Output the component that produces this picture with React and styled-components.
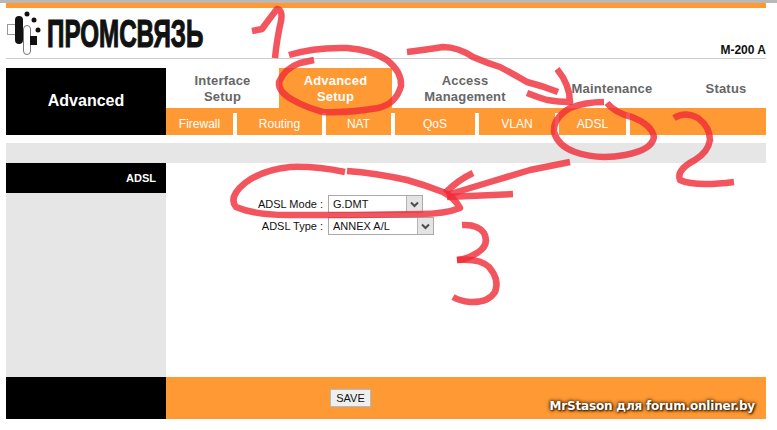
import React from 'react';
import styled, { createGlobalStyle } from 'styled-components';

const TABS = [
  { label: ['Interface', 'Setup'], width: 113 },
  { label: ['Advanced', 'Setup'], width: 113, active: true },
  { label: ['Access', 'Management'], width: 146 },
  { label: ['Maintenance'], width: 148 },
  { label: ['Status'], width: 80 },
];

const SUB_TABS = [
  { label: 'Firewall', width: 67 },
  { label: 'Routing', width: 85 },
  { label: 'NAT', width: 65 },
  { label: 'QoS', width: 80 },
  { label: 'VLAN', width: 76 },
  { label: 'ADSL', width: 67 },
];

const FIELDS = [
  { label: 'ADSL Mode :', value: 'G.DMT', width: 95 },
  { label: 'ADSL Type :', value: 'ANNEX A/L', width: 106 },
];

const SCRIBBLES = [
  // 1
  'M252 31 L262 29 Q270 18 277 9 Q283 10 281 21 Q277 38 275 58',
  // circle round Advanced Setup
  'M289 55 Q315 47 347 48 Q372 50 387 60 Q402 72 401 86 Q396 104 378 108 Q350 113 323 112 Q305 107 293 100 Q278 92 279 82 Q285 68 300 63 L314 60',
  // arrow to ADSL tab
  'M407 52 Q425 50 443 47 Q458 47 473 57 Q487 63 500 67 Q515 75 527 82 Q543 86 558 92',
  'M527 93 Q537 97 547 100 Q558 102 570 102 Q570 85 557 69',
  // circle round ADSL tab
  'M604 102 Q585 102 570 108 Q553 118 554 132 Q558 146 575 152 Q597 160 625 155 Q652 150 654 137 Q652 125 632 117 Q615 113 607 103',
  // 2
  'M674 118 Q685 111 698 118 Q710 127 710 140 Q708 152 695 160 Q676 170 680 180 Q695 187 734 182',
  // arrow to ADSL Mode
  'M570 162 L530 170 L490 182 L447 195',
  'M513 194 L447 197',
  'M473 173 Q458 180 445 193',
  // circle round ADSL Mode
  'M345 172 Q315 166 290 167 Q262 170 245 183 Q228 197 236 207 Q255 215 287 215 L353 215 L420 214 Q445 214 460 208 Q455 198 443 192 Q425 185 407 180 Q375 173 347 171',
  // 3
  'M462 225 Q478 224 484 233 Q490 245 477 253 Q468 259 457 260',
  'M457 260 Q480 258 489 267 Q500 280 495 292 Q488 303 470 302 Q460 301 453 297',
];

const App = () => (
  <Page>
    <GlobalStyle />
    <TopBar />
    <Header>
      <Logo>
        <LogoMark />
        <LogoText><span>ПРОМСВЯЗЬ</span></LogoText>
      </Logo>
      <Model>M-200 A</Model>
    </Header>

    <Nav>
      <NavTitle>Advanced</NavTitle>
      <NavMenu>
        <Tabs>
          {TABS.map(tab => (
            <Tab key={tab.label[0]} $width={tab.width} $active={tab.active}>
              {tab.label.map(line => <span key={line}>{line}</span>)}
            </Tab>
          ))}
        </Tabs>
        <SubTabs>
          {SUB_TABS.map(tab => (
            <SubTab key={tab.label} $width={tab.width}>{tab.label}</SubTab>
          ))}
          <SubTabRest />
        </SubTabs>
      </NavMenu>
    </Nav>

    <Band />

    <Main>
      <Sidebar>
        <SidebarTitle>ADSL</SidebarTitle>
      </Sidebar>
      <Form>
        {FIELDS.map(field => (
          <React.Fragment key={field.label}>
            <FieldLabel>{field.label}</FieldLabel>
            <SelectBox $width={field.width}>
              <SelectValue>{field.value}</SelectValue>
              <SelectArrow>
                <svg width="9" height="7" viewBox="0 0 9 7">
                  <path d="M1 1.5 L4.5 5 L8 1.5" fill="none" stroke="#4d4d4d" strokeWidth="2" />
                </svg>
              </SelectArrow>
            </SelectBox>
          </React.Fragment>
        ))}
      </Form>
    </Main>

    <Footer>
      <FooterSide />
      <FooterBar>
        <SaveButton type="button">SAVE</SaveButton>
        <Watermark>MrStason для forum.onliner.by</Watermark>
      </FooterBar>
    </Footer>

    <Scribbles width="777" height="430" viewBox="0 0 777 430">
      {SCRIBBLES.map(d => <path key={d} d={d} />)}
    </Scribbles>
  </Page>
);

const LogoMark = () => (
  <svg width="41" height="50" viewBox="0 0 41 50">
    <rect x="1.5" y="16.5" width="9" height="10" fill="#fff" stroke="#999" />
    <rect x="17.5" y="17.5" width="7" height="29" rx="3.5" fill="#fff" stroke="#777" />
    <rect x="9" y="8" width="8" height="28" rx="4" fill="#111" />
    <rect x="24" y="28" width="7" height="9" fill="#111" />
    <circle cx="21" cy="6" r="2.5" fill="#111" />
    <circle cx="28" cy="12" r="2.5" fill="#111" />
    <circle cx="32" cy="22" r="2.5" fill="#111" />
  </svg>
);

const GlobalStyle = createGlobalStyle`
  body {
    margin: 0;
    background: #fff;
    font-family: "Liberation Sans", Arial, sans-serif;
  }
`;

const Page = styled.div`
  position: relative;
  width: 777px;
  height: 430px;
  overflow: hidden;
  border-top: 3px solid #b8b8b8;
  box-sizing: border-box;
  padding: 0 11px 0 6px;
`;

const TopBar = styled.div`
  height: 5px;
  background: #ff9933;
`;

const Header = styled.header`
  display: flex;
  justify-content: space-between;
  align-items: flex-end;
  height: 50px;
  border-bottom: 1px solid #ccc;
`;

const Logo = styled.div`
  display: flex;
  align-items: flex-start;
  height: 50px;
`;

const LogoText = styled.div`
  width: 158px;
  margin-top: 5px;
  font-size: 39px;
  line-height: 42px;
  font-weight: 700;
  color: #111;

  & span {
    display: inline-block;
    white-space: nowrap;
    transform: scaleX(0.62);
    transform-origin: left center;
    -webkit-text-stroke: 1.2px #111;
  }
`;

const Model = styled.div`
  font-size: 12px;
  line-height: 14px;
  font-weight: 700;
  color: #111;
  padding-bottom: 1px;
`;

const Nav = styled.nav`
  display: flex;
  height: 67px;
  margin-top: 9px;
`;

const NavTitle = styled.div`
  display: flex;
  align-items: center;
  justify-content: center;
  width: 160px;
  padding-bottom: 2px;
  box-sizing: border-box;
  background: #000;
  color: #fff;
  font-size: 16px;
  font-weight: 700;
`;

const NavMenu = styled.div`
  display: flex;
  flex-direction: column;
  width: 600px;
`;

const Tabs = styled.div`
  display: flex;
  height: 40px;
`;

const Tab = styled.div`
  display: flex;
  flex-direction: column;
  align-items: center;
  justify-content: center;
  box-sizing: border-box;
  padding-top: 2px;
  width: ${props => props.$width}px;
  background: ${props => props.$active ? '#ff9933' : '#fff'};
  color: ${props => props.$active ? '#fff' : '#666'};
  font-size: 13px;
  line-height: 16px;
  font-weight: 700;
  letter-spacing: 0.2px;
`;

const SubTabs = styled.div`
  display: flex;
  height: 27px;
  box-sizing: border-box;
  padding-top: 5px;
  background: #ff9933;
`;

const SubTab = styled.div`
  display: flex;
  align-items: center;
  justify-content: center;
  box-sizing: content-box;
  width: ${props => props.$width}px;
  border-right: 4px solid #fff;
  color: #fff;
  font-size: 12px;
`;

const SubTabRest = styled.div`
  flex: 1;
`;

const Band = styled.div`
  height: 20px;
  margin-top: 8px;
  background: #e6e6e6;
`;

const Main = styled.main`
  display: flex;
  height: 214px;
`;

const Sidebar = styled.aside`
  width: 160px;
  background: #e6e6e6;
`;

const SidebarTitle = styled.div`
  height: 30px;
  padding-right: 10px;
  background: #000;
  color: #fff;
  font-size: 11px;
  line-height: 30px;
  font-weight: 700;
  text-align: right;
`;

const Form = styled.form`
  display: grid;
  grid-template-columns: 157px auto;
  grid-auto-rows: 18px;
  row-gap: 4px;
  column-gap: 5px;
  align-content: start;
  justify-content: start;
  padding-top: 32px;
`;

const FieldLabel = styled.label`
  color: #111;
  font-size: 11px;
  line-height: 18px;
  text-align: right;
`;

const SelectBox = styled.div`
  display: flex;
  box-sizing: border-box;
  width: ${props => props.$width}px;
  height: 18px;
  border: 1px solid #a9a9a9;
  background: #fff;
`;

const SelectValue = styled.div`
  flex: 1;
  padding-left: 4px;
  color: #111;
  font-size: 11px;
  line-height: 16px;
`;

const SelectArrow = styled.div`
  display: flex;
  align-items: center;
  justify-content: center;
  width: 15px;
  background: #e4e4e4;
  border-left: 1px solid #b5b5b5;
`;

const Footer = styled.footer`
  display: flex;
  height: 42px;
`;

const FooterSide = styled.div`
  width: 160px;
  background: #000;
`;

const FooterBar = styled.div`
  position: relative;
  display: flex;
  align-items: flex-start;
  flex: 1;
  padding: 12px 0 0 164px;
  background: #ff9933;
`;

const SaveButton = styled.button`
  width: 41px;
  height: 18px;
  padding: 0;
  border: 1px solid #a9bcc9;
  background: #efefef;
  color: #111;
  font-family: "Liberation Sans", Arial, sans-serif;
  font-size: 11px;
`;

const Watermark = styled.div`
  position: absolute;
  right: 11px;
  bottom: 6px;
  color: #fff;
  font-family: "DejaVu Sans", sans-serif;
  font-size: 12px;
  font-weight: 700;
  line-height: 14px;
  letter-spacing: -0.18px;
  white-space: nowrap;
  text-shadow: 0 0 3px #3a2000, 1px 1px 2px #3a2000, 0 0 4px #3a2000;
`;

const Scribbles = styled.svg`
  position: absolute;
  top: -3px;
  left: 0;
  pointer-events: none;

  & path {
    fill: none;
    stroke: #f02a37;
    stroke-opacity: 0.8;
    stroke-width: 6.5;
    stroke-linejoin: round;
  }
`;

export default App;
